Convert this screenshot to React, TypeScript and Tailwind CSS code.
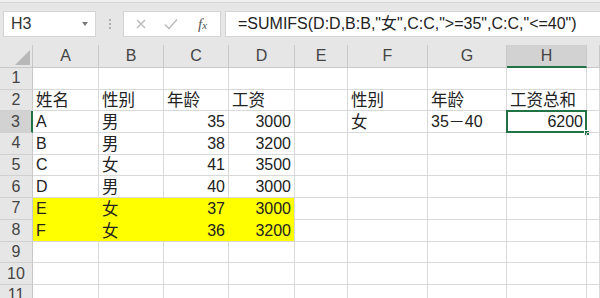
import React from "react";

const cols = ["A", "B", "C", "D", "E", "F", "G", "H", ""];
type Cell = { t: string; r?: boolean };
const data: Record<number, Cell[]> = {
  2: [{ t: "姓名" }, { t: "性别" }, { t: "年龄" }, { t: "工资" }, { t: "" }, { t: "性别" }, { t: "年龄" }, { t: "工资总和" }],
  3: [{ t: "A" }, { t: "男" }, { t: "35", r: true }, { t: "3000", r: true }, { t: "" }, { t: "女" }, { t: "35－40" }, { t: "6200", r: true }],
  4: [{ t: "B" }, { t: "男" }, { t: "38", r: true }, { t: "3200", r: true }],
  5: [{ t: "C" }, { t: "女" }, { t: "41", r: true }, { t: "3500", r: true }],
  6: [{ t: "D" }, { t: "男" }, { t: "40", r: true }, { t: "3000", r: true }],
  7: [{ t: "E" }, { t: "女" }, { t: "37", r: true }, { t: "3000", r: true }],
  8: [{ t: "F" }, { t: "女" }, { t: "36", r: true }, { t: "3200", r: true }],
};

const font = { fontFamily: '"Liberation Sans", "Noto Sans CJK SC", sans-serif' };
const isCJK = (s: string) => /[\u4e00-\u9fff]/.test(s);

export default function App() {
  const rows = Array.from({ length: 11 }, (_, i) => i + 1);
  return (
    <div className="w-[600px] h-[298px] overflow-hidden bg-[#e6e6e6] text-[#222]" style={font}>
      <div className="h-[3px] bg-[#efefef] border-b border-[#d6d6d6]" />
      <div className="h-[42px] flex items-start pt-[8px]">
        <div className="ml-[3px] w-[93px] h-[26px] bg-white border border-[#d4d4d4] flex items-center pl-[7px] pr-[7px] justify-between">
          <span className="text-[16px] text-[#333]">H3</span>
          <span className="w-0 h-0 border-l-[3.5px] border-r-[3.5px] border-t-[4px] border-l-transparent border-r-transparent border-t-[#777]" />
        </div>
        <div className="w-[27px] h-[26px] flex flex-col items-center justify-center gap-[2px]">
          <span className="w-[2px] h-[2px] bg-[#b0b0b0]" />
          <span className="w-[2px] h-[2px] bg-[#b0b0b0]" />
          <span className="w-[2px] h-[2px] bg-[#b0b0b0]" />
        </div>
        <div className="w-[98px] h-[26px] bg-white border border-[#d4d4d4] flex items-center">
          <svg width="14" height="14" viewBox="0 0 14 14" className="ml-[10px]">
            <path d="M3 3L11 11M11 3L3 11" stroke="#b8b8b8" strokeWidth="1.3" fill="none" />
          </svg>
          <svg width="16" height="14" viewBox="0 0 16 14" className="ml-[15px]">
            <path d="M2 7.5L6 11.5L14 2.5" stroke="#b8b8b8" strokeWidth="1.3" fill="none" />
          </svg>
          <span className="ml-[19px] text-[15px] italic text-[#555]" style={{ fontFamily: '"Liberation Serif", serif' }}>
            f<span className="text-[11px]">x</span>
          </span>
        </div>
        <div className="ml-[4px] flex-1 h-[26px] bg-white border border-[#d4d4d4] border-r-0 flex items-center pl-[12px]">
          <span className="text-[16px] text-[#222] whitespace-nowrap">=SUMIFS(D:D,B:B,"女",C:C,"&gt;=35",C:C,"&lt;=40")</span>
        </div>
      </div>
      <div className="grid grid-cols-[33px_66px_65px_65px_66px_53px_80px_79px_80px_1fr] grid-rows-[23px_repeat(11,21.7px)] bg-white">
        <div className="relative bg-[#e6e6e6] border-r border-b border-[#c8c8c8]">
          <svg width="16" height="15" viewBox="0 0 16 15" className="absolute right-[1px] bottom-[2px]">
            <polygon points="0,15 15,0 15,15" fill="#b8b8b8" />
          </svg>
        </div>
        {cols.map((c, i) => (
          <div
            key={c + i}
            className={
              "flex items-center justify-center text-[16px] text-[#444] border-r " +
              (c === "H"
                ? "bg-[#d2d2d2] border-b-2 border-b-[#217346] border-r-[#c8c8c8]"
                : "bg-[#e6e6e6] border-b border-[#c8c8c8]")
            }
          >
            {c}
          </div>
        ))}
        {rows.map((r) => (
          <React.Fragment key={r}>
            <div
              className={
                "flex items-center justify-center text-[16px] text-[#444] border-b border-[#d0d0d0] " +
                (r === 3 ? "bg-[#d2d2d2] border-r-2 border-r-[#217346]" : "bg-[#e6e6e6] border-r border-r-[#c8c8c8]")
              }
            >
              {r}
            </div>
            {cols.map((c, i) => {
              const cell = data[r]?.[i];
              const yellow = (r === 7 || r === 8) && i < 4;
              const active = r === 3 && c === "H";
              const border = yellow
                ? "bg-[#ffff00] border-r border-b " + (i === 3 ? "border-r-[#d6d6d6] " : "border-r-[#ffff00] ") + (r === 7 ? "border-b-[#ffff00]" : "border-b-[#d6d6d6]")
                : "border-r border-b border-[#d9d9d9]";
              const cjk = cell ? isCJK(cell.t) : false;
              return (
                <div
                  key={c + i}
                  className={
                    "relative flex items-end pb-[1px] px-[3px] leading-[18px] whitespace-nowrap " +
                    (cjk ? "text-[16.5px] " : "text-[16px] ") +
                    (cell?.r ? "justify-end " : "justify-start ") +
                    border
                  }
                >
                  {cell?.t}
                  {active && (
                    <>
                      <div className="absolute left-[-1px] top-[-1px] right-[-1px] bottom-[-1px] border-2 border-[#217346] pointer-events-none" />
                      <div className="absolute right-[-4px] bottom-[-4px] w-[6px] h-[6px] bg-[#217346] border border-white" />
                    </>
                  )}
                </div>
              );
            })}
          </React.Fragment>
        ))}
      </div>
    </div>
  );
}
